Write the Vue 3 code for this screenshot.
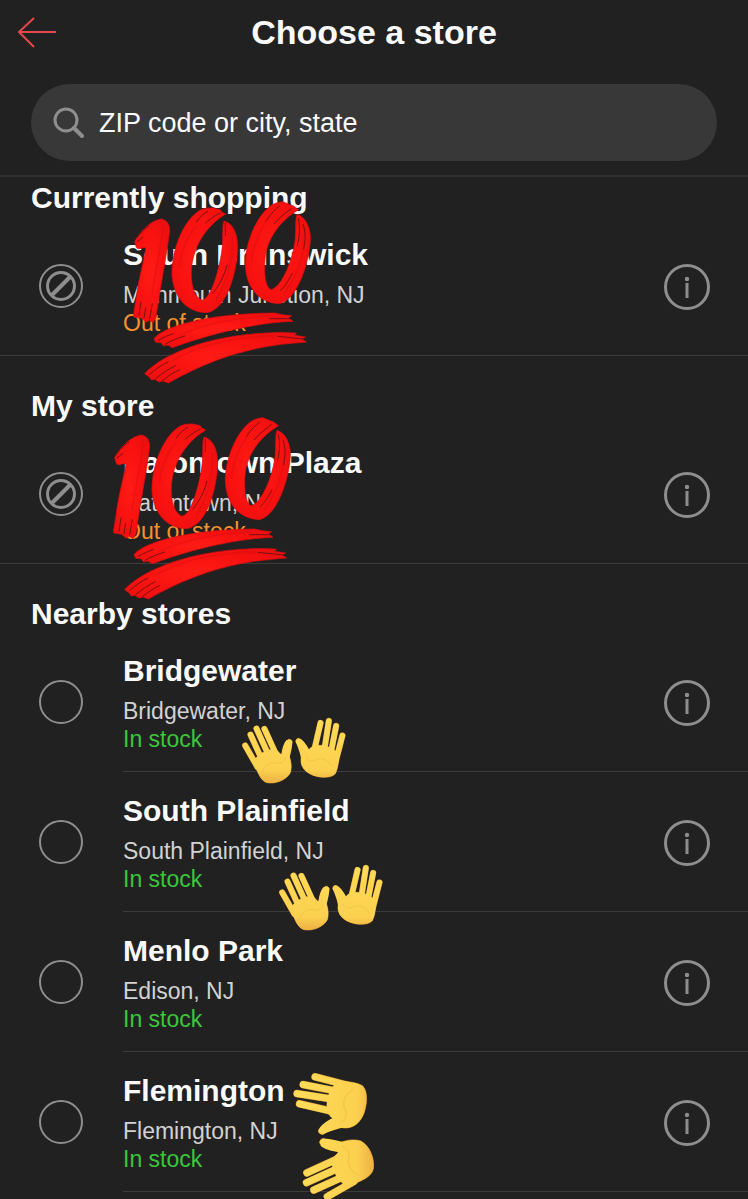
<template>
  <main class="page">
    <!-- Header -->
    <header class="header">
      <button type="button" class="btn-back" aria-label="Back">
        <svg width="40" height="32" viewBox="0 0 40 32" fill="none">
          <path d="M16 2 L1 16 L16 31 M1 16 H38" stroke="#e5484a" stroke-width="2" stroke-linejoin="round" />
        </svg>
      </button>
      <h1 class="title">Choose a store</h1>
    </header>

    <!-- Search -->
    <div class="search-bar">
      <label class="search-box">
        <svg width="32" height="32" viewBox="0 0 32 32" fill="none">
          <circle cx="13" cy="13" r="11" stroke="#8e8e8e" stroke-width="3" />
          <path d="M21 21 L29 29" stroke="#8e8e8e" stroke-width="4" stroke-linecap="round" />
        </svg>
        <input v-model="query" type="text" placeholder="ZIP code or city, state" aria-label="ZIP code or city, state" />
      </label>
    </div>

    <!-- Store sections -->
    <section v-for="section in sections" :key="section.title" class="section">
      <h2 class="section-title">{{ section.title }}</h2>
      <ul class="store-list" :class="{ inset: section.inset }">
        <li v-for="store in section.stores" :key="store.id" class="store">
          <div class="radio">
            <input
              :id="store.id"
              v-model="selected"
              type="radio"
              name="store"
              :value="store.id"
              :disabled="!store.inStock"
            />
            <svg v-if="!store.inStock" class="ban" width="30" height="30" viewBox="0 0 30 30" fill="none">
              <circle cx="15" cy="15" r="13.5" stroke="#8e8e8e" stroke-width="3" />
              <path d="M6 24 L24 6" stroke="#8e8e8e" stroke-width="4" />
            </svg>
          </div>

          <div class="store-body">
            <label class="store-info" :for="store.id">
              <span class="store-name">{{ store.name }}</span>
              <span class="store-city">{{ store.city }}</span>
              <span class="store-stock" :class="{ out: !store.inStock }">
                {{ store.inStock ? 'In stock' : 'Out of stock' }}
              </span>
            </label>
            <button type="button" class="btn-info" :aria-label="'Details for ' + store.name">
              <svg width="46" height="46" viewBox="0 0 46 46" fill="none">
                <circle cx="23" cy="23" r="21.5" stroke="#8e8e8e" stroke-width="3" />
                <circle cx="23" cy="15" r="2.2" fill="#8e8e8e" />
                <path d="M23 19 V34" stroke="#8e8e8e" stroke-width="3" />
              </svg>
            </button>
          </div>

          <!-- Stickers -->
          <svg v-if="store.sticker === 'hundred'" class="sticker hundred" :class="store.id" viewBox="100 50 540 564">
            <defs>
              <radialGradient :id="store.id + '-red'" cx="0.45" cy="0.5" r="0.6">
                <stop offset="0" stop-color="#ff1c15" />
                <stop offset="0.6" stop-color="#f91210" />
                <stop offset="1" stop-color="#ee0f10" />
              </radialGradient>
            </defs>
            <g stroke="#dc0c0f" stroke-width="2" :fill="'url(#' + store.id + '-red)'">
              <path v-for="d in brush" :key="d" :d="d" />
            </g>
            <g fill="none" stroke="#7a1012" stroke-width="3" stroke-linecap="round">
              <path v-for="d in bristles" :key="d" :d="d" />
            </g>
            <g fill="none" stroke="#c80d10" stroke-width="5" stroke-linecap="round" opacity="0.3">
              <path v-for="d in shades" :key="d" :d="d" />
            </g>
          </svg>

          <svg v-if="store.sticker === 'hands'" class="sticker hands" :class="store.id" viewBox="60 48 324 208">
            <defs>
              <linearGradient :id="store.id + '-skin'" gradientUnits="userSpaceOnUse" x1="0" y1="55" x2="0" y2="250">
                <stop offset="0" stop-color="#ffdc58" />
                <stop offset="0.8" stop-color="#fbd04f" />
                <stop offset="1" stop-color="#eeb044" />
              </linearGradient>
            </defs>
            <g v-for="hand in hands" :key="hand.palm">
              <g fill="none" stroke="#a8742a" stroke-linecap="round" stroke-width="19">
                <path v-for="d in hand.fingers" :key="d" :d="d" />
              </g>
              <path :d="hand.palm" fill="#c88d2c" stroke="#c88d2c" stroke-width="2" />
              <g fill="none" :stroke="'url(#' + store.id + '-skin)'" stroke-linecap="round" stroke-width="17">
                <path v-for="d in hand.fingers" :key="d" :d="d" />
              </g>
              <path :d="hand.thumb" :fill="'url(#' + store.id + '-skin)'" />
              <path :d="hand.palm" :fill="'url(#' + store.id + '-skin)'" />
              <path :d="hand.crease" fill="none" stroke="#e3ac38" stroke-width="3" stroke-linecap="round" opacity="0.35" />
            </g>
          </svg>
        </li>
      </ul>
    </section>
  </main>
</template>

<script setup>
import { ref } from 'vue'

const query = ref('')
const selected = ref('')

const sections = [
  {
    title: 'Currently shopping',
    inset: false,
    stores: [
      { id: 'south-brunswick', name: 'South Brunswick', city: 'Monmouth Junction, NJ', inStock: false, sticker: 'hundred' }
    ]
  },
  {
    title: 'My store',
    inset: false,
    stores: [
      { id: 'eatontown', name: 'Eatontown Plaza', city: 'Eatontown, NJ', inStock: false, sticker: 'hundred' }
    ]
  },
  {
    title: 'Nearby stores',
    inset: true,
    stores: [
      { id: 'bridgewater', name: 'Bridgewater', city: 'Bridgewater, NJ', inStock: true, sticker: 'hands' },
      { id: 'south-plainfield', name: 'South Plainfield', city: 'South Plainfield, NJ', inStock: true, sticker: 'hands' },
      { id: 'menlo-park', name: 'Menlo Park', city: 'Edison, NJ', inStock: true },
      { id: 'flemington', name: 'Flemington', city: 'Flemington, NJ', inStock: true, sticker: 'hands' }
    ]
  }
]

// Brush strokes of the red sticker
const brush = [
  'M105 184 C122 150 158 119 185 116 C205 120 213 137 209 160 C200 230 180 330 169 412 L160 427 L149 420 L140 426 L126 414 L102 410 C100 400 107 375 110 350 C116 300 133 240 139 203 C126 198 116 212 110 201 Z',
  'M378 101 L366 95 L362 88 L340 83 C325 82 312 84 300 90 C245 125 215 220 217 285 C222 355 265 397 322 397 C390 385 415 250 414 195 C412 150 395 128 373 122 C366 140 372 180 366 215 C356 275 336 350 308 360 C277 350 270 290 278 245 C290 180 330 130 378 101 Z',
  'M597 88 L580 76 L568 72 L550 64 C535 65 525 69 515 75 C465 110 435 200 437 255 C440 325 480 368 540 370 C600 355 635 220 632 165 C628 130 612 108 592 102 C584 125 592 160 583 200 C572 255 545 318 515 328 C492 322 492 255 499 215 C512 160 550 115 597 88 Z',
  'M163 475 C185 445 300 400 525 398 L548 403 L576 406 L566 413 L580 423 C510 426 390 440 218 502 L205 494 L192 497 L184 487 L168 486 Z',
  'M135 580 C170 540 290 465 520 457 C550 455 570 458 590 458 L585 465 L618 470 L606 476 L621 485 C540 492 400 498 206 608 L190 602 L178 605 L166 597 L155 599 L148 589 Z'
]

const bristles = [
  'M112 172 C125 154 137 144 147 138',
  'M113 184 L130 171',
  'M118 405 L124 365',
  'M133 412 L138 382',
  'M150 415 L158 370',
  'M290 125 C300 110 312 100 324 93',
  'M318 128 C335 112 350 104 362 98',
  'M382 255 C373 290 358 315 340 338',
  'M377 128 L377 165',
  'M500 120 C515 99 526 88 540 77',
  'M524 130 C542 109 559 97 575 85',
  'M596 115 C602 142 600 168 593 195',
  'M577 280 C566 303 553 320 542 331',
  'M610 132 C619 155 617 180 612 205',
  'M176 480 C190 471 205 465 221 460',
  'M196 492 C216 480 234 474 255 467',
  'M510 415 L570 415',
  'M150 582 C169 565 187 554 205 545',
  'M169 594 C189 578 207 566 227 556',
  'M188 601 C207 586 222 576 240 568',
  'M535 468 L612 476'
]

const shades = [
  'M190 135 C186 190 170 260 157 340',
  'M240 260 C242 220 263 165 290 138',
  'M398 172 C402 230 385 300 350 358',
  'M455 245 C460 200 480 150 505 115',
  'M614 170 C612 230 590 290 555 338',
  'M240 465 C320 427 420 412 510 407',
  'M220 540 C320 482 430 470 525 466'
]

// Pair of open hands, left then right
const hands = [
  {
    fingers: [
      'M75 137 L112 202',
      'M91 104 L129 188',
      'M109 86 L148 172',
      'M133 87 L170 168',
      'M208 127 Q196 142 194 172'
    ],
    thumb: 'M200 120 C190 130 187 146 184 162 L176 190 L206 190 C208 170 216 150 217 130 Z',
    palm: 'M98 184 C112 170 120 160 130 157 C144 148 162 146 172 153 C177 158 181 164 185 164 L205 162 C214 183 216 203 211 219 C200 239 172 252 146 250 C130 248 121 235 113 218 Z',
    crease: 'M126 217 C132 196 152 184 172 190 C184 193 192 184 198 173'
  },
  {
    fingers: [
      'M368 107 L348 184',
      'M349 78 L331 170',
      'M327 63 L312 160',
      'M302 69 L281 160',
      'M236 124 Q254 138 260 168'
    ],
    thumb: 'M244 119 C256 129 264 140 270 156 L274 190 L245 190 C244 168 236 148 228 128 Z',
    palm: 'M246 160 C256 156 265 154 270 146 C282 132 310 134 332 143 L357 160 C358 185 354 209 346 223 C331 237 302 234 280 227 C256 218 241 201 243 178 Z',
    crease: 'M258 171 C263 185 279 187 293 178 C315 173 328 185 337 200'
  }
]
</script>

<style>
body {
  margin: 0;
  background-color: #212121;
}
</style>

<style scoped>
.page {
  box-sizing: border-box;
  min-height: 100vh;
  overflow: hidden;
  background-color: #212121;
  color: #fafafa;
  font-family: "Liberation Sans", Arial, sans-serif;
}

button {
  padding: 0;
  border: none;
  background: none;
  cursor: pointer;
}

svg {
  display: block;
}

/* Header */
.header {
  display: grid;
  grid-template-columns: 40px 1fr 40px;
  align-items: center;
  height: 64px;
  padding: 0 18px;
}

.title {
  margin: 0;
  font-size: 34px;
  line-height: 40px;
  text-align: center;
}

/* Search */
.search-bar {
  padding: 20px 31px 14px;
  border-bottom: 2px solid #303030;
}

.search-box {
  display: flex;
  align-items: center;
  gap: 14px;
  height: 77px;
  padding: 0 22px;
  border-radius: 39px;
  background-color: #383838;
}

.search-box input {
  flex: 1;
  min-width: 0;
  padding: 0;
  border: none;
  outline: none;
  background: none;
  color: #fafafa;
  font-family: inherit;
  font-size: 27px;
  line-height: 32px;
}

.search-box input::placeholder {
  color: #fafafa;
  opacity: 1;
}

/* Sections */
.section {
  padding-top: 32px;
}

.search-bar + .section {
  padding-top: 3px;
}

.section-title {
  margin: 0;
  padding: 0 31px;
  font-size: 30px;
  line-height: 36px;
}

.store-list {
  margin: 0;
  padding: 0;
  list-style: none;
}

.store {
  position: relative;
  display: flex;
  gap: 40px;
  padding-left: 39px;
  border-bottom: 1px solid #3b3b3b;
}

.store-body {
  display: flex;
  flex: 1;
  align-items: center;
  padding: 21px 38px 18px 0;
}

.inset .store {
  border-bottom: none;
}

.inset .store-body {
  border-bottom: 1px solid #3b3b3b;
}

/* Radio */
.radio {
  display: grid;
  place-items: center;
}

.radio > * {
  grid-area: 1 / 1;
}

.radio input {
  appearance: none;
  width: 44px;
  height: 44px;
  margin: 0;
  border: 2px solid #8e8e8e;
  border-radius: 50%;
}

.radio input:checked {
  border-width: 12px;
}

.ban {
  pointer-events: none;
}

/* Store text */
.store-info {
  display: flex;
  flex: 1;
  flex-direction: column;
}

.store-name {
  margin-bottom: 8px;
  font-size: 30px;
  font-weight: bold;
  line-height: 36px;
}

.store-city,
.store-stock {
  font-size: 23px;
  line-height: 28px;
}

.store-city {
  color: #d2d2d2;
}

.store-stock {
  color: #3cc63c;
}

.store-stock.out {
  color: #f5922f;
}

/* Stickers lie over the rows */
.sticker {
  position: absolute;
  z-index: 1;
  pointer-events: none;
}

.hundred {
  width: 180px;
  height: 188px;
}

.hundred.south-brunswick {
  top: -19px;
  left: 133px;
}

.hundred.eatontown {
  top: -11px;
  left: 113px;
}

.hands {
  width: 108px;
  height: 69px;
}

.hands.bridgewater {
  top: 84px;
  left: 240px;
}

.hands.south-plainfield {
  top: 91px;
  left: 277px;
}

.hands.flemington {
  top: 42px;
  left: 267px;
  width: 133px;
  height: 85px;
  transform: rotate(-90deg);
}
</style>
